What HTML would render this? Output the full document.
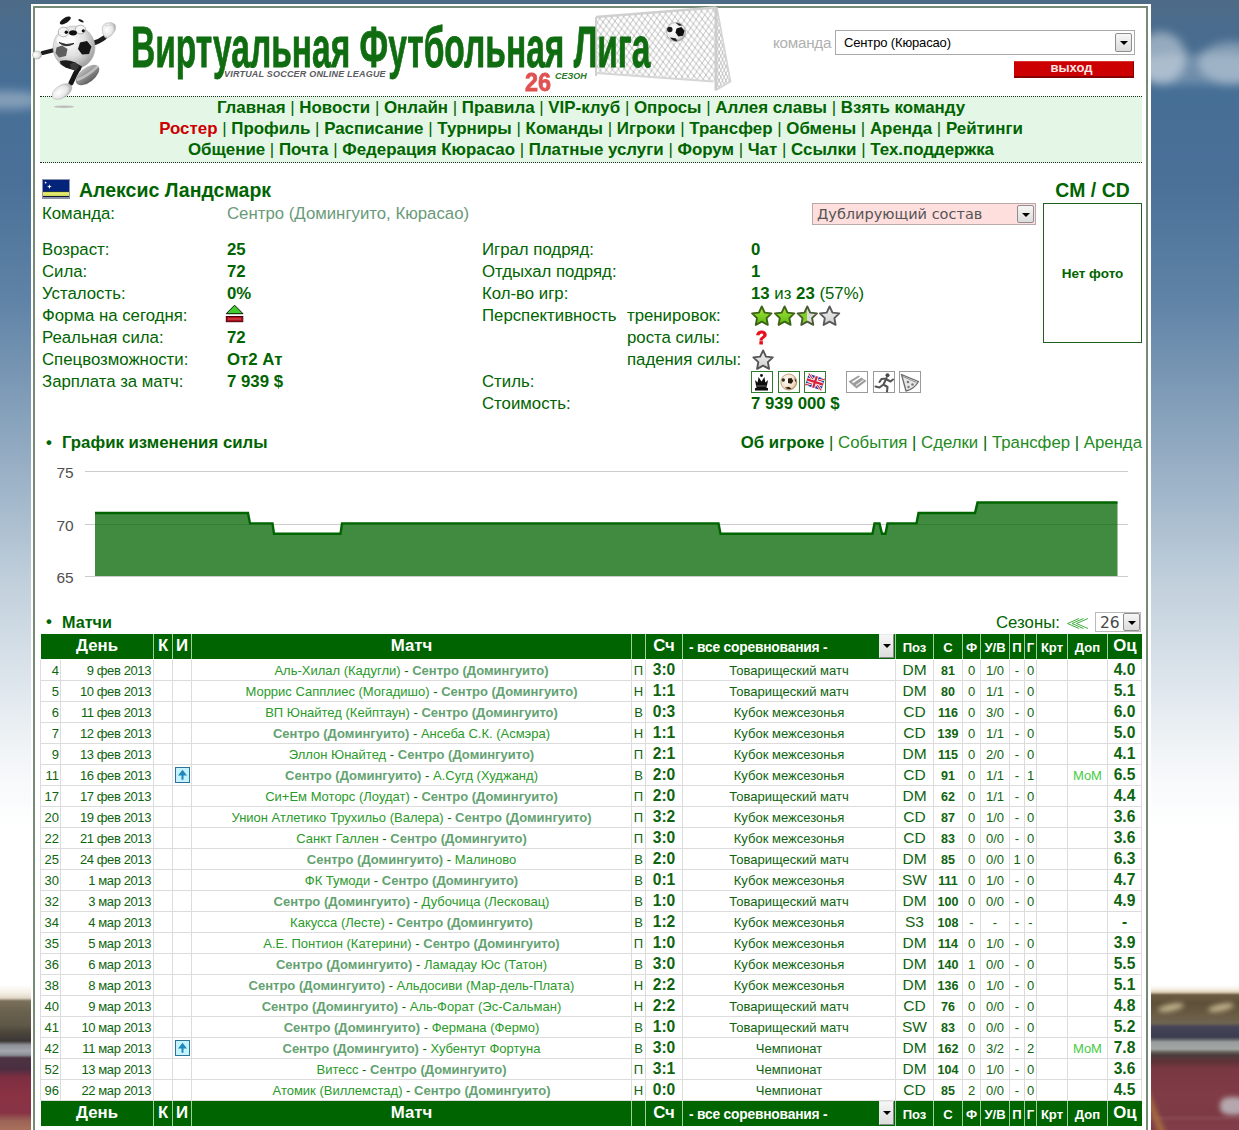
<!DOCTYPE html>
<html lang="ru"><head><meta charset="utf-8"><title>Алексис Ландсмарк - Виртуальная Футбольная Лига</title>
<style>
*{box-sizing:border-box}
html,body{margin:0;padding:0}
html{overflow:hidden;width:1239px;height:1130px}
body{width:1239px;height:1130px;overflow:hidden;position:relative;font-family:"Liberation Sans",Arial,sans-serif;font-size:16.8px;color:#006400;
background:#fff}
#sky{position:absolute;left:0;top:0;width:1239px;height:1130px;
background:linear-gradient(to bottom,#4d6b86 0,#4a6c8d 25px,#466f96 90px,#4a7098 180px,#5f83a6 300px,#819db8 400px,#a3b8cb 500px,#c0cfdb 580px,#dde5ec 680px,#f3f6f8 760px,#fff 830px)}
#stadL{position:absolute;left:0;top:985px;width:40px;height:145px;
background:linear-gradient(to bottom,rgba(255,255,255,0) 0,#f4efe6 8px,#e2d8c6 13px,#7a705c 16px,#6a624e 26px,#5e5848 40px,#4a443a 48px,#3c3836 56px,#8e9198 60px,#a4a8ae 66px,#8a8e96 70px,#4c3442 73px,#4a2e40 84px,#7c2e40 92px,#8a3244 110px,#883446 128px,#9c6456 136px,#a8705c 145px)}
#stadR{position:absolute;left:1140px;top:985px;width:99px;height:145px;overflow:hidden;
background:linear-gradient(to bottom,rgba(255,255,255,0) 0,#f6f0e6 4px,#e0d2ba 7px,#6c5c42 10px,#5e5038 18px,#6a5c44 30px,#6e6450 38px,#454458 42px,#3b3c50 52px,#5a5c62 54px,#989c9c 57px,#a2a6a4 64px,#6a6460 67px,#4c3c3c 70px,#5e3238 76px,#7a3842 84px,#803c46 110px,#7c3a44 130px,#864650 133px,#7e3c46 137px,#823e48 145px)}
#stadR i{position:absolute;display:block;filter:blur(2.5px)}
.cl{position:absolute;border-radius:50%;background:#fff;filter:blur(5px)}
#wrap{position:absolute;left:31px;top:4px;width:1120px;height:1200px;background:#fff}
#wrap i.b{position:absolute;left:2px;top:2px;right:3px;bottom:0;border:2px solid #768a76;border-bottom:0}
.t{position:absolute;white-space:nowrap;line-height:22px;height:22px}
b,.b{font-weight:bold}
a{color:#228b22;text-decoration:none}
#logo{z-index:2;position:absolute;left:131px;top:15px;font-weight:bold;font-size:57.7px;line-height:64px;white-space:nowrap;color:#106c10;transform-origin:0 0;transform:scaleX(.581);-webkit-text-stroke:.8px #106c10}
#sub{position:absolute;left:224px;top:69px;font:italic bold 9px/10px "Liberation Sans",sans-serif;color:#5a5a60;white-space:nowrap;letter-spacing:.2px}
#s26{position:absolute;left:525px;top:67px;font:bold 26px/30px "Liberation Sans",sans-serif;color:#e05252;transform-origin:0 0;transform:scaleX(.9);-webkit-text-stroke:.8px #e05252}
#sez{position:absolute;left:555px;top:71px;font:italic bold 9px/10px "Liberation Sans",sans-serif;color:#2a7a2a;letter-spacing:.1px}
#nav{position:absolute;left:40px;top:96px;width:1102px;height:67px;background:#e4f6e6;border-top:1px dotted #1c2c1c;border-bottom:1px dotted #1c2c1c;text-align:center;font-size:16.9px;line-height:21px;padding-top:0px;color:#006400}
#nav b{color:#006400}
#nav b.red{color:#cc0000}
#cmd{left:773px;top:32px;color:#b0b0b0;font-size:15.2px;letter-spacing:-.25px}
.sel{position:absolute;border:1px solid #a9a9a9;background:#fff}
.dd{position:absolute;display:block;width:17px;border:1px solid #8e8e8e;border-radius:2px;background:linear-gradient(#f6f6f6,#dcdcdc)}
.dd b{position:absolute;left:4px;top:7px;width:0;height:0;border:4px solid transparent;border-top:4px solid #000;border-bottom:0}
#exit{position:absolute;left:1014px;top:61px;width:120px;height:17px;background:#cc0000;border-top:1px solid #dc3030;border-bottom:2px solid #8a0000;border-right:1px solid #8a0000;color:#ffe6e6;font:bold 13px/11px "Liberation Sans",sans-serif;text-align:center;padding-right:4px}
/* table */
#tb{position:absolute;left:41px;top:634px;width:1101px}
.r,.h{display:grid;grid-template-columns:20px 93px 19px 19px 440px 14px 37px 213px 38px 29px 18px 29px 15px 12px 31px 40px 34px}
.h{grid-template-columns:113px 19px 19px 440px 14px 37px 213px 38px 29px 18px 29px 15px 12px 31px 40px 34px;background:#006400;color:#fff;height:25px;font-weight:bold}
.r{height:21px;font-size:13px;line-height:22px;color:#0f640f}
.c{border-right:1px solid #dcdcdc;border-bottom:1px solid #dcdcdc;text-align:center;white-space:nowrap;height:21px;position:relative}
.c.n{text-align:right;padding-right:1px;box-shadow:-1px 0 0 #dcdcdc}
.c.d{text-align:right;padding-right:2px;letter-spacing:-.4px}
.c.m{font-size:13px}
.c.m a{color:#2a9a2a}
.c.m a.o{color:#64a272;font-weight:bold}
.c.m s{text-decoration:none;color:#0f640f}
.c.sc,.c.oc{font-weight:bold;font-size:15.6px;line-height:20px}
.c.ps{font-size:15.5px;line-height:20px}
.c.s{font-weight:bold;font-size:12.5px}
.c.mm{color:#44cc44}
.c.cp{font-size:13px}
.upi{position:absolute;left:2px;top:2px}
.hc{border-right:1px solid #9fcf9f;text-align:center;white-space:nowrap;height:25px;line-height:24px;font-size:16.8px;position:relative}
.hc:last-child{border-right:0}
.h.top{margin-bottom:1px}
.hc.sm{font-size:13.1px;line-height:27px}
.hc.cs{text-align:left;padding-left:6px;font-size:13.8px;line-height:27px;letter-spacing:-.2px}
.hc.cs .dd{right:1px;top:0;height:24px;width:15px;border-radius:0;border-color:#e8e8e8 #888 #888 #e8e8e8}
.hc.cs .dd b{top:9px;left:3px}
</style></head><body>
<div id="sky"></div>
<div id="stadL"></div><div id="stadR"><i style="left:18px;top:19px;width:26px;height:7px;background:#d8c8a0;border-radius:50%;transform:rotate(-12deg);opacity:.8"></i><i style="left:68px;top:19px;width:26px;height:7px;background:#d8c8a0;border-radius:50%;transform:rotate(-12deg);opacity:.8"></i><i style="left:80px;top:112px;width:26px;height:18px;background:#c8ccd0;border-radius:40%;opacity:.75"></i><i style="left:12px;top:100px;width:6px;height:60px;background:#b8843c;transform:rotate(-22deg);opacity:.7"></i></div>
<div class="cl" style="left:-30px;top:91px;width:70px;height:18px;opacity:.33;border-radius:40%"></div>
<div class="cl" style="left:1136px;top:32px;width:50px;height:52px;opacity:.42"></div>
<div class="cl" style="left:1198px;top:42px;width:70px;height:42px;opacity:.33"></div>
<div class="cl" style="left:1140px;top:54px;width:120px;height:30px;opacity:.22;border-radius:30%"></div>
<div id="wrap"><i class="b"></i></div>

<div id="logo">Виртуальная Футбольная Лига</div>
<div id="sub">VIRTUAL SOCCER ONLINE LEAGUE</div>
<div id="s26">26</div><div id="sez">СЕЗОН</div>
<svg style="position:absolute;left:590px;top:0" width="150" height="96" viewBox="590 0 150 96">
<defs>
<pattern id="net" width="6" height="8" patternUnits="userSpaceOnUse" patternTransform="rotate(-4)"><path d="M0 0L6 8M6 0L0 8" stroke="#a9a9a9" stroke-width=".75" fill="none"/></pattern>
<pattern id="net2" width="3.400" height="7" patternUnits="userSpaceOnUse"><path d="M0 0L3.400 7M3.400 0L0 7" stroke="#a9a9a9" stroke-width=".7" fill="none"/></pattern>
<radialGradient id="gball" cx=".4" cy=".35" r=".7"><stop offset="0" stop-color="#fff"/><stop offset=".7" stop-color="#e8e8e8"/><stop offset="1" stop-color="#9a9a9a"/></radialGradient>
<filter id="bl2"><feGaussianBlur stdDeviation=".35"/></filter>
</defs>
<g filter="url(#bl2)">
<polygon points="596,17 716,7.500 716,82 597,73" fill="url(#net)"/>
<polygon points="717,8 730,81.500 717,89" fill="url(#net2)"/>
<path d="M596 17L716 7.500" stroke="#d0d0d0" stroke-width="2.400" fill="none"/>
<path d="M596 17V76" stroke="#cfcfcf" stroke-width="2" fill="none"/>
<path d="M596 73L713 81.500" stroke="#d6d6d6" stroke-width="2" fill="none"/>
<path d="M717 8L730.500 81.500L717 89.500" stroke="#d4d4d4" stroke-width="1.600" fill="none"/>
<path d="M716 7V90.500" stroke="#cdcdcd" stroke-width="3" fill="none"/>
<circle cx="676" cy="32" r="9.600" fill="url(#gball)" stroke="#888" stroke-width=".5"/>
<path d="M676.500 28.500l4.800-1.500 3.300 3.800-1.500 5-4.800.7-2.800-4z" fill="#111"/>
<circle cx="669.800" cy="29.500" r="2.700" fill="#1a1a1a"/>
<path d="M670 37.500q3 4.200 7.500 3.300l-2-2.600z" fill="#1a1a1a"/>
<path d="M675.500 22.800q4.500 0 7 2.700l-3.500.2z" fill="#222"/>
</g>
</svg>


<div class="t" id="cmd">команда</div>
<div class="sel" style="left:835px;top:30px;width:300px;height:25px"><span class="t" style="left:8px;top:1px;color:#000;font-size:13px;letter-spacing:-.15px">Сентро (Кюрасао)</span><i class="dd" style="right:2px;top:2px;height:19px"><b></b></i></div>
<div id="exit">выход</div>

<div id="nav"><b>Главная</b> | <b>Новости</b> | <b>Онлайн</b> | <b>Правила</b> | <b>VIP-клуб</b> | <b>Опросы</b> | <b>Аллея славы</b> | <b>Взять команду</b><br>
<b class="red">Ростер</b> | <b>Профиль</b> | <b>Расписание</b> | <b>Турниры</b> | <b>Команды</b> | <b>Игроки</b> | <b>Трансфер</b> | <b>Обмены</b> | <b>Аренда</b> | <b>Рейтинги</b><br>
<b>Общение</b> | <b>Почта</b> | <b>Федерация Кюрасао</b> | <b>Платные услуги</b> | <b>Форум</b> | <b>Чат</b> | <b>Ссылки</b> | <b>Тех.поддержка</b></div>

<svg style="position:absolute;left:28px;top:5px" width="100" height="110" viewBox="28 5 100 110">
<defs>
<radialGradient id="gb" cx=".4" cy=".35" r=".75"><stop offset="0" stop-color="#fff"/><stop offset=".5" stop-color="#dedede"/><stop offset="1" stop-color="#8c8c8c"/></radialGradient>
<linearGradient id="gs" x1="0" y1="0" x2="0" y2="1"><stop offset="0" stop-color="#bdbdbd"/><stop offset=".5" stop-color="#8c8c8c"/><stop offset="1" stop-color="#5e5e5e"/></linearGradient>
<radialGradient id="gw" cx=".35" cy=".45" r=".7"><stop offset="0" stop-color="#fff"/><stop offset=".6" stop-color="#e6e6e6"/><stop offset="1" stop-color="#9c9c9c"/></radialGradient>
<filter id="bl" x="-10%" y="-10%" width="120%" height="120%"><feGaussianBlur stdDeviation=".45"/></filter>
</defs>
<g filter="url(#bl)">
<ellipse cx="64" cy="106.700" rx="10" ry="1.300" fill="#bdbdbd"/>
<!-- left arm -->
<path d="M53.500 50.200 L42.500 53" stroke="#1c1c1c" stroke-width="4" stroke-linecap="round" fill="none"/>
<ellipse cx="37" cy="55" rx="4.600" ry="4" fill="url(#gw)" stroke="#aaa" stroke-width=".5"/>
<!-- right arm -->
<path d="M92 43.500 Q99 42 104.500 37.500" stroke="#1c1c1c" stroke-width="4.800" stroke-linecap="round" fill="none"/>
<path d="M102.500 33 Q101 24 107 23 Q111 21.500 115 24.500 Q117 29 113 33.500 Q109 39 105 37.500 Z" fill="url(#gw)" stroke="#b5b5b5" stroke-width=".6"/>
<path d="M105 26 q1.500 -1.500 3 0 M109 25.500 q1.500 -1.500 3 0 M112.500 27 q1.300 -1 2.200 .5" stroke="#c4c4c4" stroke-width=".8" fill="none"/>
<!-- back leg + lower shoe -->
<path d="M79 67 Q75 74 71 83" stroke="#151515" stroke-width="5" stroke-linecap="round" fill="none"/>
<ellipse cx="62" cy="91.500" rx="11" ry="6.200" transform="rotate(-32 62 91.500)" fill="url(#gw)" stroke="#b0b0b0" stroke-width=".5"/>
<!-- big shoe -->
<ellipse cx="87.500" cy="75" rx="13.800" ry="7.200" transform="rotate(-38 87.500 75)" fill="url(#gs)"/>
<path d="M77 80 Q88 76 98 66" stroke="#d2d2d2" stroke-width="2.500" fill="none" opacity=".7"/>
<!-- ball -->
<ellipse cx="74" cy="47.500" rx="21" ry="21.500" fill="url(#gb)" stroke="#b4b4b4" stroke-width=".6"/>
<polygon points="80,42.500 87,41 91.500,46.500 89,54 82,54.500 78,49" fill="#141414"/>
<path d="M56.500 47.500 L62 45.500 L67.500 49 L66 56 L59 57.500 L55.500 53 Z" fill="#5e5e5e"/>
<path d="M60 61 Q67 59 74 62 L82 66.500 L80 71 L72 69.500 Q65 68 60.500 64 Z" fill="#1a1a1a"/>
<path d="M70 64 l5 -2 l4 4 l-3 5 l-5 -2 z" fill="#3a3a3a"/>
<!-- muzzle -->
<ellipse cx="66" cy="40" rx="9.500" ry="6" fill="#fbfbfb"/>
<path d="M59 42.500 Q65.500 48.500 74 43.500 Q66 46 59 42.500 Z" fill="#222" stroke="#222" stroke-width=".9" stroke-linejoin="round"/>
<!-- eyes -->
<ellipse cx="63.500" cy="32" rx="5.300" ry="4.800" fill="#f4f4f4" stroke="#9a9a9a" stroke-width=".7"/>
<ellipse cx="80.500" cy="29.500" rx="5.200" ry="4.300" fill="#f4f4f4" stroke="#9a9a9a" stroke-width=".7"/>
<circle cx="66.300" cy="32.300" r="1.700" fill="#111"/>
<circle cx="83.300" cy="30.800" r="1.600" fill="#111"/>
<ellipse cx="73" cy="32.800" rx="4" ry="2.600" fill="#111"/>
<!-- brows -->
<ellipse cx="65.300" cy="20.500" rx="6.300" ry="2.600" transform="rotate(-32 65.300 20.500)" fill="#151515"/>
<ellipse cx="81" cy="20.800" rx="3" ry="1.100" transform="rotate(28 81 20.800)" fill="#1c1c1c"/>
</g>
</svg>

<!-- player -->
<svg style="position:absolute;left:42px;top:179px" width="28" height="20" viewBox="0 0 28 20"><rect x="0" y="0" width="28" height="20" fill="#8d93ab"/><rect x="1" y="1" width="26" height="17" fill="#04247c"/><rect x="1" y="12" width="26" height="1" fill="#1c3450"/><rect x="1" y="13" width="26" height="4" fill="#d4dc5c"/><rect x="1" y="14" width="26" height="1.500" fill="#e6ea78"/><rect x="1" y="17" width="26" height="1" fill="#101c30"/><circle cx="3.600" cy="3.600" r=".9" fill="#fff"/><path d="M7.400 5.200l.6 1.800 1.800.6-1.800.6-.6 1.800-.6-1.800-1.800-.6 1.800-.6z" fill="#fff"/></svg>
<div class="t b" style="left:79px;top:178px;font-size:19.5px;line-height:24px">Алексис Ландсмарк</div>
<div class="t" style="left:42px;top:203px">Команда:</div>
<div class="t" style="left:227px;top:203px;color:#6a9a7a">Сентро (Домингуито, Кюрасао)</div>

<div class="t" style="left:42px;top:239px">Возраст:</div><div class="t b" style="left:227px;top:239px">25</div>
<div class="t" style="left:42px;top:261px">Сила:</div><div class="t b" style="left:227px;top:261px">72</div>
<div class="t" style="left:42px;top:283px">Усталость:</div><div class="t b" style="left:227px;top:283px">0%</div>
<div class="t" style="left:42px;top:305px">Форма на сегодня:</div>
<div class="t" style="left:42px;top:327px">Реальная сила:</div><div class="t b" style="left:227px;top:327px">72</div>
<div class="t" style="left:42px;top:349px">Спецвозможности:</div><div class="t b" style="left:227px;top:349px">От2 Ат</div>
<div class="t" style="left:42px;top:371px">Зарплата за матч:</div><div class="t b" style="left:227px;top:371px">7 939 $</div>

<div class="t" style="left:482px;top:239px">Играл подряд:</div><div class="t b" style="left:751px;top:239px">0</div>
<div class="t" style="left:482px;top:261px">Отдыхал подряд:</div><div class="t b" style="left:751px;top:261px">1</div>
<div class="t" style="left:482px;top:283px">Кол-во игр:</div><div class="t" style="left:751px;top:283px"><b>13</b> из <b>23</b> (57%)</div>
<div class="t" style="left:482px;top:305px">Перспективность</div><div class="t" style="left:627px;top:305px">тренировок:</div>
<div class="t" style="left:627px;top:327px">роста силы:</div>
<div class="t" style="left:627px;top:349px">падения силы:</div>
<div class="t" style="left:482px;top:371px">Стиль:</div>
<div class="t" style="left:482px;top:393px">Стоимость:</div><div class="t b" style="left:751px;top:393px">7 939 000 $</div>
<svg style="position:absolute;left:220px;top:300px" width="720" height="100" viewBox="220 300 720 100">
<defs>
<linearGradient id="sg" x1="0" y1="0" x2="0" y2="1"><stop offset="0" stop-color="#a6e83a"/><stop offset="1" stop-color="#5cb814"/></linearGradient>
<linearGradient id="sgr" x1="0" y1="0" x2="0" y2="1"><stop offset="0" stop-color="#f2f2f2"/><stop offset="1" stop-color="#cfcfcf"/></linearGradient>
<linearGradient id="sh" x1="0" y1="0" x2="1" y2="0"><stop offset=".5" stop-color="#7fd024"/><stop offset=".5" stop-color="#dcdcdc"/></linearGradient>
<radialGradient id="fb" cx=".4" cy=".4" r=".7"><stop offset="0" stop-color="#fff"/><stop offset=".7" stop-color="#f0dcc0"/><stop offset="1" stop-color="#b08858"/></radialGradient>
<filter id="b3"><feGaussianBlur stdDeviation=".3"/></filter>
<filter id="b4"><feGaussianBlur stdDeviation=".5"/></filter>
</defs>
<g filter="url(#b3)"><path d="M234.600 305.200L243 313.700H226.200Z" fill="#3fce2e" stroke="#0c1c08" stroke-width="1" stroke-linejoin="round"/><rect x="226.300" y="316.500" width="16.500" height="5.200" fill="#b0101c" stroke="#4a060a" stroke-width="1"/><path d="M228 319H241" stroke="#e05a5a" stroke-width="1"/></g>
<g filter="url(#b3)" stroke-width="1.900" stroke-linejoin="round">
<polygon points="761.8,306.4 764.7,312.6 771.5,313.4 766.6,318.1 767.8,324.9 761.8,321.6 755.8,324.9 757.0,318.1 752.1,313.4 758.9,312.6" fill="url(#sg)" stroke="#3c6414"/>
<polygon points="784.6,306.4 787.5,312.6 794.3,313.4 789.4,318.1 790.6,324.9 784.6,321.6 778.6,324.9 779.8,318.1 774.9,313.4 781.7,312.6" fill="url(#sg)" stroke="#3c6414"/>
<polygon points="807.3,306.4 810.2,312.6 817.0,313.4 812.1,318.1 813.3,324.9 807.3,321.6 801.3,324.9 802.5,318.1 797.6,313.4 804.4,312.6" fill="url(#sh)" stroke="#4a5a34"/>
<polygon points="829.6,306.4 832.5,312.6 839.3,313.4 834.4,318.1 835.6,324.9 829.6,321.6 823.6,324.9 824.8,318.1 819.9,313.4 826.7,312.6" fill="url(#sgr)" stroke="#5a5a5a"/>
<polygon points="763.1,350.4 766.0,356.6 772.8,357.4 767.9,362.1 769.1,368.9 763.1,365.6 757.1,368.9 758.3,362.1 753.4,357.4 760.2,356.6" fill="url(#sgr)" stroke="#555"/>
</g>
<text x="755.800" y="343.800" font-family="Liberation Sans, sans-serif" font-weight="bold" font-size="19" fill="#e8101c" stroke="#e8101c" stroke-width=".8" filter="url(#b3)">?</text>
<rect x="751.5" y="371.500" width="21" height="21" fill="#fff" stroke="#2e7d2e" stroke-width="1"/>
<rect x="778.5" y="371.500" width="21" height="21" fill="#fff" stroke="#2e7d2e" stroke-width="1"/>
<rect x="804.5" y="371.500" width="21" height="21" fill="#fff" stroke="#2e7d2e" stroke-width="1"/>
<rect x="846.5" y="371.500" width="21" height="21" fill="#fff" stroke="#9a9a9a" stroke-width="1"/>
<rect x="873.5" y="371.500" width="21" height="21" fill="#fff" stroke="#9a9a9a" stroke-width="1"/>
<rect x="899.5" y="371.500" width="21" height="21" fill="#fff" stroke="#9a9a9a" stroke-width="1"/>
<g filter="url(#b3)">
<path d="M755 390.500h13v-2.500h-1.500l1.500-8-2.600 2.600-1-5.500-2.900 4.500-2.900-4.500-1 5.500-2.600-2.600 1.500 8h-1.500z" fill="#0d0d0d"/><circle cx="761.500" cy="375.500" r="1.400" fill="#0d0d0d"/><path d="M756.500 386h10" stroke="#8a8a8a" stroke-width=".8"/>
<circle cx="788.800" cy="382" r="8" fill="url(#fb)" stroke="#9a7a50" stroke-width=".6"/><path d="M788 378.500l3.500-.5 1.800 3-2 2.800-3.300-.8z" fill="#2a1a10"/><circle cx="783.300" cy="380" r="1.700" fill="#3a2a1a"/><path d="M785 387.500q3 2.500 6.500 1.200l-2.500-2z" fill="#3a2a1a"/><path d="M794.500 377.500q2 2.500 2 5.500l-1.600-2.500z" fill="#3a2a1a"/>
<g transform="rotate(18 815 382)"><rect x="806.500" y="376" width="17" height="12" fill="#2a3a9a"/><path d="M806.500 376L823.500 388M823.500 376L806.500 388" stroke="#fff" stroke-width="2.600"/><path d="M806.500 376L823.500 388M823.500 376L806.500 388" stroke="#d8203a" stroke-width="1"/><path d="M815 376V388M806.500 382H823.500" stroke="#fff" stroke-width="4"/><path d="M815 376V388M806.500 382H823.500" stroke="#d8203a" stroke-width="2.200"/></g>
<path d="M848.500 381.500L858.500 375.500L866.500 381L856.500 388.500Z" fill="#9c9c9c"/><path d="M852.500 382.500L861 376.800" stroke="#fff" stroke-width="1.600"/><path d="M856 385.500L863.500 380" stroke="#e8e8e8" stroke-width="1.200"/>
<circle cx="887.500" cy="375.300" r="2" fill="#4a4a4a"/><path d="M886.500 378L883.500 384.500L887.500 387L887 391.500M883.500 384.500L879.500 387.500L875.500 386.500M886 378.500L881.500 379L879.500 382M886.800 379.500L890.500 381.500L893 379.500" stroke="#555" stroke-width="2.100" fill="none" stroke-linecap="round" stroke-linejoin="round"/>
<path d="M901.500 374.500L918.500 381.500Q914 389.500 906 391Z" fill="#e6e6e6" stroke="#6a6a6a" stroke-width="1.300" stroke-linejoin="round"/><path d="M903 376.500L916.500 382.500" stroke="#8a8a8a" stroke-width="1"/><circle cx="908" cy="382" r="1.300" fill="#7a7a7a"/><circle cx="912.500" cy="384.500" r="1.300" fill="#7a7a7a"/><circle cx="908.500" cy="387" r="1.200" fill="#7a7a7a"/>
</g></svg>

<div class="sel" style="left:812px;top:203px;width:224px;height:22px;background:#ffdede;border-color:#b9a9a9"><span class="t" style="left:4px;top:-1px;color:#555;font:14.5px/22px 'DejaVu Sans',sans-serif">Дублирующий состав</span><i class="dd" style="right:1px;top:1px;height:18px"><b></b></i></div>
<div class="t b" style="left:1043px;width:99px;text-align:center;top:178px;font-size:19.4px;line-height:24px">CM / CD</div>
<div style="position:absolute;left:1043px;top:203px;width:99px;height:140px;border:1px solid #1f5f1f"></div>
<div class="t b" style="left:1043px;width:99px;text-align:center;top:263px;font-size:13.5px">Нет фото</div>

<!-- chart -->
<div class="t b" style="left:46px;top:432px">•</div>
<div class="t b" style="left:62px;top:432px">График изменения силы</div>
<div class="t" style="right:97px;top:432px;text-align:right"><b>Об игроке</b> | <a>События</a> | <a>Сделки</a> | <a>Трансфер</a> | <a>Аренда</a></div>
<svg style="position:absolute;left:41px;top:455px" width="1101" height="140" viewBox="41 455 1101 140">
<g fill="none" stroke="#ccc" stroke-width="1"><path d="M85 471.5H1128M85 524.5H1128M85 576.5H1128"/></g>
<path d="M95 576V513H248L250 523.4H272.5L274 533.8H340.5L342 523.4H718.5L720.5 533.8H872.5L874.5 523.4H879.5L882 533.8H885.5L887.5 523.4H916.5L918.5 513H975L977.5 502.5H1117.5V576Z" fill="#006400" fill-opacity=".75"/>
<path d="M95 513H248L250 523.4H272.5L274 533.8H340.5L342 523.4H718.5L720.5 533.8H872.5L874.5 523.4H879.5L882 533.8H885.5L887.5 523.4H916.5L918.5 513H975L977.5 502.5H1117.5" fill="none" stroke="#006400" stroke-width="2.4"/>
<g font-family="Liberation Sans, sans-serif" font-size="15.500" fill="#505050" text-anchor="end"><text x="73.700" y="478.200">75</text><text x="73.700" y="530.800">70</text><text x="73.700" y="583.200">65</text></g>
</svg>

<!-- matches -->
<div class="t b" style="left:46px;top:611px">•</div>
<div class="t b" style="left:62px;top:611px;font-size:16.2px">Матчи</div>
<div class="t" style="left:996px;top:612px">Сезоны:</div>
<svg style="position:absolute;left:1066px;top:616px" width="24" height="14" viewBox="0 0 24 14"><path d="M13 2.500L1.500 7.500L13 12.500M17.500 2.500L6 7.500L17.500 12.500M22 2.500L10.500 7.500L22 12.500" fill="none" stroke="#3fae3f" stroke-width="1"/></svg>
<div class="sel" style="left:1095px;top:612px;width:46px;height:20px;border-color:#bbb"><span class="t" style="left:4px;top:-1px;color:#4a4a4a;font:15.5px/23px 'DejaVu Sans',sans-serif">26</span><i class="dd" style="right:0px;top:0px;height:18px"><b></b></i></div>
<div id="tb"><div class="h top"><div class="hc day">День</div><div class="hc">К</div><div class="hc">И</div><div class="hc">Матч</div><div class="hc"></div><div class="hc big">Сч</div><div class="hc cs"><span>- все соревнования -</span><i class="dd"><b></b></i></div><div class="hc sm">Поз</div><div class="hc sm">С</div><div class="hc sm">Ф</div><div class="hc sm">У/В</div><div class="hc sm">П</div><div class="hc sm">Г</div><div class="hc sm">Крт</div><div class="hc sm">Доп</div><div class="hc big">Оц</div></div><div class="r"><div class="c n">4</div><div class="c d">9 фев 2013</div><div class="c"></div><div class="c i"></div><div class="c m"><a>Аль-Хилал (Кадугли)</a> <s>-</s> <a class="o">Сентро (Домингуито)</a></div><div class="c rs">П</div><div class="c sc">3:0</div><div class="c cp">Товарищеский матч</div><div class="c ps">DM</div><div class="c s">81</div><div class="c">0</div><div class="c">1/0</div><div class="c">-</div><div class="c">0</div><div class="c"></div><div class="c mm"></div><div class="c oc">4.0</div></div><div class="r"><div class="c n">5</div><div class="c d">10 фев 2013</div><div class="c"></div><div class="c i"></div><div class="c m"><a>Моррис Сапплиес (Могадишо)</a> <s>-</s> <a class="o">Сентро (Домингуито)</a></div><div class="c rs">Н</div><div class="c sc">1:1</div><div class="c cp">Товарищеский матч</div><div class="c ps">DM</div><div class="c s">80</div><div class="c">0</div><div class="c">1/1</div><div class="c">-</div><div class="c">0</div><div class="c"></div><div class="c mm"></div><div class="c oc">5.1</div></div><div class="r"><div class="c n">6</div><div class="c d">11 фев 2013</div><div class="c"></div><div class="c i"></div><div class="c m"><a>ВП Юнайтед (Кейптаун)</a> <s>-</s> <a class="o">Сентро (Домингуито)</a></div><div class="c rs">В</div><div class="c sc">0:3</div><div class="c cp">Кубок межсезонья</div><div class="c ps">CD</div><div class="c s">116</div><div class="c">0</div><div class="c">3/0</div><div class="c">-</div><div class="c">0</div><div class="c"></div><div class="c mm"></div><div class="c oc">6.0</div></div><div class="r"><div class="c n">7</div><div class="c d">12 фев 2013</div><div class="c"></div><div class="c i"></div><div class="c m"><a class="o">Сентро (Домингуито)</a> <s>-</s> <a>Ансеба С.К. (Асмэра)</a></div><div class="c rs">Н</div><div class="c sc">1:1</div><div class="c cp">Кубок межсезонья</div><div class="c ps">CD</div><div class="c s">139</div><div class="c">0</div><div class="c">1/1</div><div class="c">-</div><div class="c">0</div><div class="c"></div><div class="c mm"></div><div class="c oc">5.0</div></div><div class="r"><div class="c n">9</div><div class="c d">13 фев 2013</div><div class="c"></div><div class="c i"></div><div class="c m"><a>Эллон Юнайтед</a> <s>-</s> <a class="o">Сентро (Домингуито)</a></div><div class="c rs">П</div><div class="c sc">2:1</div><div class="c cp">Кубок межсезонья</div><div class="c ps">DM</div><div class="c s">115</div><div class="c">0</div><div class="c">2/0</div><div class="c">-</div><div class="c">0</div><div class="c"></div><div class="c mm"></div><div class="c oc">4.1</div></div><div class="r"><div class="c n">11</div><div class="c d">16 фев 2013</div><div class="c"></div><div class="c i"><svg class="upi" width="15" height="16" viewBox="0 0 15 16"><rect x="0.5" y="0.5" width="14" height="15" fill="#c4f2ff" stroke="#2c7496"/><path d="M7.500 2.800L12 8.500H8.500V12.800H6.500V8.500H3Z" fill="#2088b8"/></svg></div><div class="c m"><a class="o">Сентро (Домингуито)</a> <s>-</s> <a>А.Сугд (Худжанд)</a></div><div class="c rs">В</div><div class="c sc">2:0</div><div class="c cp">Кубок межсезонья</div><div class="c ps">CD</div><div class="c s">91</div><div class="c">0</div><div class="c">1/1</div><div class="c">-</div><div class="c">1</div><div class="c"></div><div class="c mm">MoM</div><div class="c oc">6.5</div></div><div class="r"><div class="c n">17</div><div class="c d">17 фев 2013</div><div class="c"></div><div class="c i"></div><div class="c m"><a>Си+Ем Моторс (Лоудат)</a> <s>-</s> <a class="o">Сентро (Домингуито)</a></div><div class="c rs">П</div><div class="c sc">2:0</div><div class="c cp">Товарищеский матч</div><div class="c ps">DM</div><div class="c s">62</div><div class="c">0</div><div class="c">1/1</div><div class="c">-</div><div class="c">0</div><div class="c"></div><div class="c mm"></div><div class="c oc">4.4</div></div><div class="r"><div class="c n">20</div><div class="c d">19 фев 2013</div><div class="c"></div><div class="c i"></div><div class="c m"><a>Унион Атлетико Трухильо (Валера)</a> <s>-</s> <a class="o">Сентро (Домингуито)</a></div><div class="c rs">П</div><div class="c sc">3:2</div><div class="c cp">Кубок межсезонья</div><div class="c ps">CD</div><div class="c s">87</div><div class="c">0</div><div class="c">1/0</div><div class="c">-</div><div class="c">0</div><div class="c"></div><div class="c mm"></div><div class="c oc">3.6</div></div><div class="r"><div class="c n">22</div><div class="c d">21 фев 2013</div><div class="c"></div><div class="c i"></div><div class="c m"><a>Санкт Галлен</a> <s>-</s> <a class="o">Сентро (Домингуито)</a></div><div class="c rs">П</div><div class="c sc">3:0</div><div class="c cp">Кубок межсезонья</div><div class="c ps">CD</div><div class="c s">83</div><div class="c">0</div><div class="c">0/0</div><div class="c">-</div><div class="c">0</div><div class="c"></div><div class="c mm"></div><div class="c oc">3.6</div></div><div class="r"><div class="c n">25</div><div class="c d">24 фев 2013</div><div class="c"></div><div class="c i"></div><div class="c m"><a class="o">Сентро (Домингуито)</a> <s>-</s> <a>Малиново</a></div><div class="c rs">В</div><div class="c sc">2:0</div><div class="c cp">Товарищеский матч</div><div class="c ps">DM</div><div class="c s">85</div><div class="c">0</div><div class="c">0/0</div><div class="c">1</div><div class="c">0</div><div class="c"></div><div class="c mm"></div><div class="c oc">6.3</div></div><div class="r"><div class="c n">30</div><div class="c d">1 мар 2013</div><div class="c"></div><div class="c i"></div><div class="c m"><a>ФК Тумоди</a> <s>-</s> <a class="o">Сентро (Домингуито)</a></div><div class="c rs">В</div><div class="c sc">0:1</div><div class="c cp">Кубок межсезонья</div><div class="c ps">SW</div><div class="c s">111</div><div class="c">0</div><div class="c">1/0</div><div class="c">-</div><div class="c">0</div><div class="c"></div><div class="c mm"></div><div class="c oc">4.7</div></div><div class="r"><div class="c n">32</div><div class="c d">3 мар 2013</div><div class="c"></div><div class="c i"></div><div class="c m"><a class="o">Сентро (Домингуито)</a> <s>-</s> <a>Дубочица (Лесковац)</a></div><div class="c rs">В</div><div class="c sc">1:0</div><div class="c cp">Товарищеский матч</div><div class="c ps">DM</div><div class="c s">100</div><div class="c">0</div><div class="c">0/0</div><div class="c">-</div><div class="c">0</div><div class="c"></div><div class="c mm"></div><div class="c oc">4.9</div></div><div class="r"><div class="c n">34</div><div class="c d">4 мар 2013</div><div class="c"></div><div class="c i"></div><div class="c m"><a>Какусса (Лесте)</a> <s>-</s> <a class="o">Сентро (Домингуито)</a></div><div class="c rs">В</div><div class="c sc">1:2</div><div class="c cp">Кубок межсезонья</div><div class="c ps">S3</div><div class="c s">108</div><div class="c">-</div><div class="c">-</div><div class="c">-</div><div class="c">-</div><div class="c"></div><div class="c mm"></div><div class="c oc">-</div></div><div class="r"><div class="c n">35</div><div class="c d">5 мар 2013</div><div class="c"></div><div class="c i"></div><div class="c m"><a>А.Е. Понтион (Катерини)</a> <s>-</s> <a class="o">Сентро (Домингуито)</a></div><div class="c rs">П</div><div class="c sc">1:0</div><div class="c cp">Кубок межсезонья</div><div class="c ps">DM</div><div class="c s">114</div><div class="c">0</div><div class="c">1/0</div><div class="c">-</div><div class="c">0</div><div class="c"></div><div class="c mm"></div><div class="c oc">3.9</div></div><div class="r"><div class="c n">36</div><div class="c d">6 мар 2013</div><div class="c"></div><div class="c i"></div><div class="c m"><a class="o">Сентро (Домингуито)</a> <s>-</s> <a>Ламадау Юс (Татон)</a></div><div class="c rs">В</div><div class="c sc">3:0</div><div class="c cp">Кубок межсезонья</div><div class="c ps">DM</div><div class="c s">140</div><div class="c">1</div><div class="c">0/0</div><div class="c">-</div><div class="c">0</div><div class="c"></div><div class="c mm"></div><div class="c oc">5.5</div></div><div class="r"><div class="c n">38</div><div class="c d">8 мар 2013</div><div class="c"></div><div class="c i"></div><div class="c m"><a class="o">Сентро (Домингуито)</a> <s>-</s> <a>Альдосиви (Мар-дель-Плата)</a></div><div class="c rs">Н</div><div class="c sc">2:2</div><div class="c cp">Кубок межсезонья</div><div class="c ps">DM</div><div class="c s">136</div><div class="c">0</div><div class="c">1/0</div><div class="c">-</div><div class="c">0</div><div class="c"></div><div class="c mm"></div><div class="c oc">5.1</div></div><div class="r"><div class="c n">40</div><div class="c d">9 мар 2013</div><div class="c"></div><div class="c i"></div><div class="c m"><a class="o">Сентро (Домингуито)</a> <s>-</s> <a>Аль-Форат (Эс-Сальман)</a></div><div class="c rs">Н</div><div class="c sc">2:2</div><div class="c cp">Товарищеский матч</div><div class="c ps">CD</div><div class="c s">76</div><div class="c">0</div><div class="c">0/0</div><div class="c">-</div><div class="c">0</div><div class="c"></div><div class="c mm"></div><div class="c oc">4.8</div></div><div class="r"><div class="c n">41</div><div class="c d">10 мар 2013</div><div class="c"></div><div class="c i"></div><div class="c m"><a class="o">Сентро (Домингуито)</a> <s>-</s> <a>Фермана (Фермо)</a></div><div class="c rs">В</div><div class="c sc">1:0</div><div class="c cp">Товарищеский матч</div><div class="c ps">SW</div><div class="c s">83</div><div class="c">0</div><div class="c">0/0</div><div class="c">-</div><div class="c">0</div><div class="c"></div><div class="c mm"></div><div class="c oc">5.2</div></div><div class="r"><div class="c n">42</div><div class="c d">11 мар 2013</div><div class="c"></div><div class="c i"><svg class="upi" width="15" height="16" viewBox="0 0 15 16"><rect x="0.5" y="0.5" width="14" height="15" fill="#c4f2ff" stroke="#2c7496"/><path d="M7.500 2.800L12 8.500H8.500V12.800H6.500V8.500H3Z" fill="#2088b8"/></svg></div><div class="c m"><a class="o">Сентро (Домингуито)</a> <s>-</s> <a>Хубентут Фортуна</a></div><div class="c rs">В</div><div class="c sc">3:0</div><div class="c cp">Чемпионат</div><div class="c ps">DM</div><div class="c s">162</div><div class="c">0</div><div class="c">3/2</div><div class="c">-</div><div class="c">2</div><div class="c"></div><div class="c mm">MoM</div><div class="c oc">7.8</div></div><div class="r"><div class="c n">52</div><div class="c d">13 мар 2013</div><div class="c"></div><div class="c i"></div><div class="c m"><a>Витесс</a> <s>-</s> <a class="o">Сентро (Домингуито)</a></div><div class="c rs">П</div><div class="c sc">3:1</div><div class="c cp">Чемпионат</div><div class="c ps">DM</div><div class="c s">104</div><div class="c">0</div><div class="c">1/0</div><div class="c">-</div><div class="c">0</div><div class="c"></div><div class="c mm"></div><div class="c oc">3.6</div></div><div class="r"><div class="c n">96</div><div class="c d">22 мар 2013</div><div class="c"></div><div class="c i"></div><div class="c m"><a>Атомик (Виллемстад)</a> <s>-</s> <a class="o">Сентро (Домингуито)</a></div><div class="c rs">Н</div><div class="c sc">0:0</div><div class="c cp">Чемпионат</div><div class="c ps">CD</div><div class="c s">85</div><div class="c">2</div><div class="c">0/0</div><div class="c">-</div><div class="c">0</div><div class="c"></div><div class="c mm"></div><div class="c oc">4.5</div></div><div class="h bot"><div class="hc day">День</div><div class="hc">К</div><div class="hc">И</div><div class="hc">Матч</div><div class="hc"></div><div class="hc big">Сч</div><div class="hc cs"><span>- все соревнования -</span><i class="dd"><b></b></i></div><div class="hc sm">Поз</div><div class="hc sm">С</div><div class="hc sm">Ф</div><div class="hc sm">У/В</div><div class="hc sm">П</div><div class="hc sm">Г</div><div class="hc sm">Крт</div><div class="hc sm">Доп</div><div class="hc big">Оц</div></div></div>
</body></html>
